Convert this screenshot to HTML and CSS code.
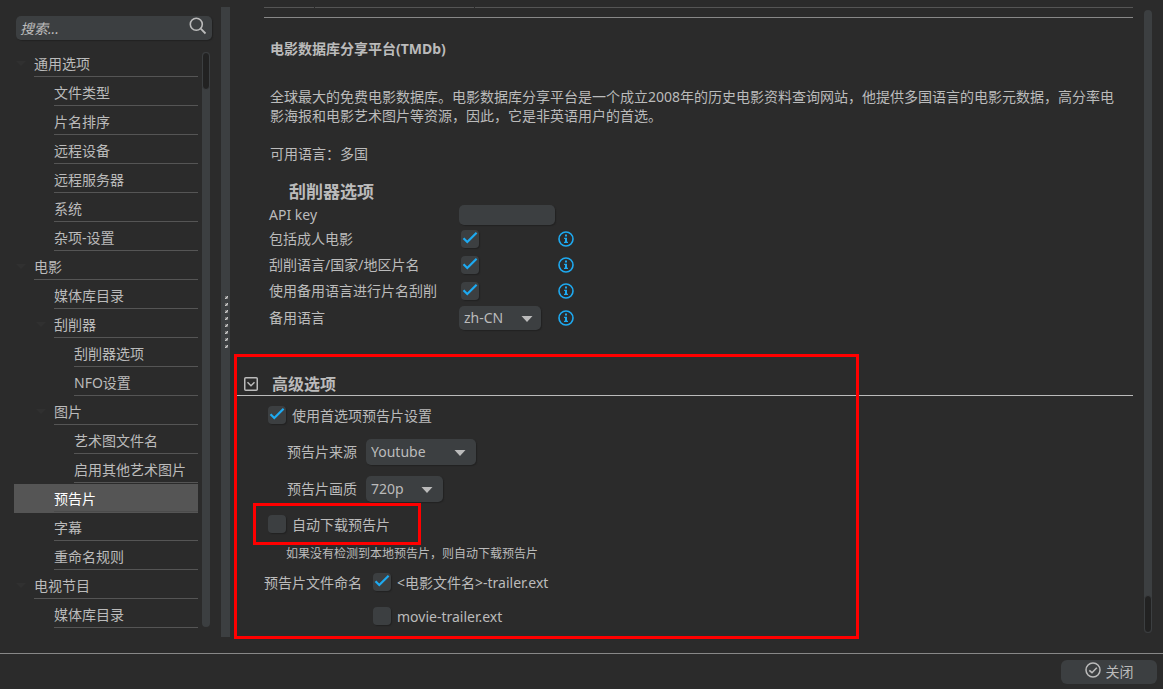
FILE: index.html
```
<!DOCTYPE html>
<html lang="zh-CN">
<head>
<meta charset="utf-8">
<title>设置</title>
<link rel="stylesheet" href="styles.css">
</head>
<body>
<svg class="defs" aria-hidden="true">
  <symbol id="tick" viewBox="0 0 18 18"><path d="M2.5 8.2 6.3 12 15.6 2.8" fill="none" stroke="#1eaaf1" stroke-width="2.2"/></symbol>
  <symbol id="info" viewBox="0 0 16 16"><circle cx="8" cy="8" r="7" fill="none" stroke="#1eaaf1" stroke-width="1.6"/><path d="M7 3.6h2v2H7zM6.1 6.8H9v4h1v1.2H6v-1.2h1V8h-.9z" fill="#1eaaf1"/></symbol>
  <symbol id="arrow" viewBox="0 0 12 6"><path d="M.5 0h11L6 6z" fill="#bbb"/></symbol>
</svg>
<div class="app">
  <div class="workspace">
    <aside class="sidebar">
      <div class="search">
        <input type="text" placeholder="搜索..." aria-label="搜索">
        <svg class="search-icon" viewBox="0 0 18 18" aria-hidden="true"><circle cx="7.3" cy="7.3" r="6" fill="none" stroke="#bbb" stroke-width="1.6"/><path d="M11.7 11.7 16.5 16.5" stroke="#bbb" stroke-width="1.8"/></svg>
      </div>
      <div class="tree-area">
        <ul class="tree">
          <li class="l1 open"><a href="#">通用选项</a></li>
          <li class="l2"><a href="#">文件类型</a></li>
          <li class="l2"><a href="#">片名排序</a></li>
          <li class="l2"><a href="#">远程设备</a></li>
          <li class="l2"><a href="#">远程服务器</a></li>
          <li class="l2"><a href="#">系统</a></li>
          <li class="l2"><a href="#">杂项-设置</a></li>
          <li class="l1 open"><a href="#">电影</a></li>
          <li class="l2"><a href="#">媒体库目录</a></li>
          <li class="l2 open"><a href="#">刮削器</a></li>
          <li class="l3"><a href="#">刮削器选项</a></li>
          <li class="l3"><a href="#">NFO设置</a></li>
          <li class="l2 open"><a href="#">图片</a></li>
          <li class="l3"><a href="#">艺术图文件名</a></li>
          <li class="l3"><a href="#">启用其他艺术图片</a></li>
          <li class="l2 selected"><a href="#" aria-current="page">预告片</a></li>
          <li class="l2"><a href="#">字幕</a></li>
          <li class="l2"><a href="#">重命名规则</a></li>
          <li class="l1 open"><a href="#">电视节目</a></li>
          <li class="l2"><a href="#">媒体库目录</a></li>
        </ul>
        <div class="scrollbar"><div class="thumb"></div></div>
      </div>
    </aside>
    <div class="splitter"><i></i><i></i><i></i><i></i><i></i><i></i><i></i><i></i></div>
    <main class="content">
      <div class="page">
        <section class="scraper">
          <div class="table-end"><span></span><span></span><span></span></div>
          <div class="about">
            <h3>电影数据库分享平台(TMDb)</h3>
            <p>全球最大的免费电影数据库。电影数据库分享平台是一个成立2008年的历史电影资料查询网站，他提供多国语言的电影元数据，高分率电影海报和电影艺术图片等资源，因此，它是非英语用户的首选。</p>
            <p>可用语言：多国</p>
          </div>
          <h2>刮削器选项</h2>
          <div class="form">
            <label for="key">API key</label>
            <input class="field" id="key" type="text">
            <label for="adult">包括成人电影</label>
            <span class="check"><input id="adult" type="checkbox" checked><svg><use href="#tick"/></svg></span>
            <svg class="info"><use href="#info"/></svg>
            <label for="region">刮削语言/国家/地区片名</label>
            <span class="check"><input id="region" type="checkbox" checked><svg><use href="#tick"/></svg></span>
            <svg class="info"><use href="#info"/></svg>
            <label for="fallback">使用备用语言进行片名刮削</label>
            <span class="check"><input id="fallback" type="checkbox" checked><svg><use href="#tick"/></svg></span>
            <svg class="info"><use href="#info"/></svg>
            <label for="lang">备用语言</label>
            <span class="select lang"><select id="lang"><option>zh-CN</option></select><svg><use href="#arrow"/></svg></span>
            <svg class="info"><use href="#info"/></svg>
          </div>
        </section>
        <section class="advanced">
          <h2>
            <svg viewBox="0 0 14 14" aria-hidden="true"><rect x=".75" y=".75" width="12.5" height="12.5" rx="1" fill="none" stroke="#bbb" stroke-width="1.5"/><path d="M3.5 5.3 7 8.7l3.5-3.4" fill="none" stroke="#bbb" stroke-width="1.5"/></svg>
            高级选项
          </h2>
          <div class="row option first">
            <span class="check"><input id="use" type="checkbox" checked><svg><use href="#tick"/></svg></span>
            <label for="use">使用首选项预告片设置</label>
          </div>
          <div class="row choice">
            <label for="source">预告片来源</label>
            <span class="select source"><select id="source"><option>Youtube</option></select><svg><use href="#arrow"/></svg></span>
          </div>
          <div class="row choice">
            <label for="quality">预告片画质</label>
            <span class="select quality"><select id="quality"><option>720p</option></select><svg><use href="#arrow"/></svg></span>
          </div>
          <div class="row option auto">
            <span class="check"><input id="auto" type="checkbox"></span>
            <label for="auto">自动下载预告片</label>
            <div class="mark mark-small"></div>
          </div>
          <p class="hint">如果没有检测到本地预告片，则自动下载预告片</p>
          <div class="naming">
            <span class="name">预告片文件命名</span>
            <div class="row">
              <span class="check"><input id="n1" type="checkbox" checked><svg><use href="#tick"/></svg></span>
              <label for="n1">&lt;电影文件名&gt;-trailer.ext</label>
            </div>
            <div class="row second">
              <span class="check"><input id="n2" type="checkbox"></span>
              <label for="n2">movie-trailer.ext</label>
            </div>
          </div>
          <div class="mark mark-large"></div>
        </section>
      </div>
      <div class="scrollbar at-end"><div class="thumb"></div></div>
    </main>
  </div>
  <footer class="footer">
    <button type="button"><svg viewBox="0 0 16 16" aria-hidden="true"><circle cx="8" cy="8" r="7" fill="none" stroke="#bbb" stroke-width="1.5"/><path d="M4.3 8.3 7 10.7l4.8-5" fill="none" stroke="#bbb" stroke-width="1.6"/></svg>关闭</button>
  </footer>
</div>
</body>
</html>
```
FILE: styles.css
```
* { box-sizing: border-box; }
body, h2, h3, p, ul { margin: 0; padding: 0; }
body {
  background: #2b2b2b;
  color: #bbb;
  font: 14px/20px "Noto Sans", "Noto Sans CJK SC", sans-serif;
}
input, select, button { font: inherit; color: inherit; border: 0; margin: 0; }
svg { display: block; flex: none; }
.defs { position: absolute; width: 0; height: 0; }

.app { min-height: 100vh; display: flex; flex-direction: column; }
.workspace { flex: 1; display: flex; border-bottom: 1px solid #888; }

.sidebar { width: 221px; flex: none; padding: 16px 9px 24px 14px; display: flex; flex-direction: column; }
.search {
  display: flex; align-items: center;
  height: 24px; margin-left: 2px; padding: 0 5px 0 4px;
  background: #3c3f41; border-radius: 5px; box-shadow: 1px 1px 1px #222;
}
.search input { flex: 1; min-width: 0; background: none; padding: 0; height: 24px; font-style: italic; outline: 0; }
.search input::placeholder { color: #bbb; opacity: 1; }
.search-icon { width: 18px; height: 18px; margin-bottom: 4px; }

.tree-area { flex: 1; display: flex; gap: 4px; padding: 9px 2px 0 0; }
.tree { flex: 1; list-style: none; }
.tree li { position: relative; height: 29px; padding-bottom: 1px; }
.tree a {
  display: block; height: 28px; line-height: 29px;
  color: inherit; text-decoration: none; border-bottom: 1px solid #555;
}
.tree .l1 { padding-left: 20px; }
.tree .l2 { padding-left: 40px; }
.tree .l3 { padding-left: 60px; }
.tree .open::before {
  content: ""; position: absolute; top: 12px; margin-left: -18px;
  border: 5px solid transparent; border-top-color: #303030; border-bottom: 0;
}
.tree .selected { background: #555; color: #fff; }
.tree .selected a { border-color: #4b4b4b; }

.scrollbar { width: 8px; flex: none; background: #3c3f41; border-radius: 4px; display: flex; flex-direction: column; }
.sidebar .scrollbar { margin: 3px 0 2px; }
.thumb { height: 38px; background: #222; border: 1px solid #3c3f41; border-radius: 4px; }
.at-end { justify-content: flex-end; margin: 10px 11px 20px; }

.splitter {
  width: 9px; flex: none; margin: 7px 0 16px; padding-left: 2px;
  background: #3c3f41;
  display: flex; flex-direction: column; align-items: center; justify-content: center; gap: 4px;
}
.splitter i { width: 3px; height: 3px; background: linear-gradient(135deg, #777 35%, #ccc 50%, #777 85%); }

.content { flex: 1; min-width: 0; display: flex; }
.page { flex: 1; min-width: 0; padding-left: 7px; }
.scraper { padding-left: 27px; }
.table-end { display: grid; grid-template-columns: 50px 159px 1fr; gap: 1px; padding: 7px 0 9px; border-bottom: 1px solid #888; }
.table-end span { height: 1px; background: #555; }
.about { padding: 21px 14px 0 6px; line-height: 19px; }
.about h3 { font-size: 14px; margin-bottom: 29px; }
.about p { margin-bottom: 19px; }
.scraper h2 { font-size: 17px; line-height: 24px; margin-top: -2px; padding-left: 25px; }
.form {
  display: grid; grid-template-columns: 190px 96px auto; grid-template-rows: 22px repeat(3, 26px) 28px;
  align-items: center; justify-content: start; padding-left: 5px;
}
.form label { grid-column: 1; }
.form .check { margin-left: 2px; }
.field { width: 96px; height: 20px; background: #3c3f41; border-radius: 5px; padding: 0 5px; box-shadow: 1px 1px 1px #222; }
.info { width: 16px; height: 16px; margin-left: 3px; }

.check { position: relative; width: 18px; height: 18px; flex: none; }
.check input { appearance: none; display: block; width: 18px; height: 18px; background: #3c3f41; border-radius: 4px; box-shadow: 1px 1px 1px #222; }
.check svg { position: absolute; inset: 0; width: 18px; height: 18px; pointer-events: none; }

.select { position: relative; display: block; height: 26px; }
.select select { appearance: none; width: 100%; height: 100%; padding: 0 5px; background: #3c3f41; border-radius: 5px; box-shadow: 1px 1px 1px #222; }
.select svg { position: absolute; right: 8px; top: 50%; margin-top: -2px; width: 12px; height: 6px; pointer-events: none; }
.lang { width: 82px; height: 24px; }
.source { width: 110px; }
.source svg, .quality svg { right: 10px; }
.quality { width: 77px; }

.advanced { position: relative; margin-top: 40px; }
.advanced h2 {
  display: flex; align-items: center; gap: 14px;
  height: 24px; padding-left: 7px; font-size: 16px; border-bottom: 1px solid #bbb;
}
.advanced h2 svg { width: 14px; height: 14px; }
.row { display: flex; gap: 6px; height: 22px; line-height: 24px; }
.row .check { margin-top: 2px; }
.option { padding-left: 31px; }
.first { margin-top: 8px; margin-bottom: 13px; }
.choice { height: 26px; line-height: 26px; padding-left: 50px; gap: 9px; margin-bottom: 11px; }
.auto { position: relative; margin-bottom: 9px; }
.hint { padding-left: 49px; font-size: 12px; margin-bottom: 7px; }
.naming { display: grid; grid-template-columns: 109px 1fr; row-gap: 12px; padding-left: 27px; }
.name { line-height: 24px; height: 22px; }
.second { grid-column: 2; }

.mark { position: absolute; border: 3px solid #f00; pointer-events: none; }
.mark-small { left: 16px; top: -10px; width: 168px; height: 42px; }
.mark-large { left: -3px; top: -18px; width: 625px; height: 285px; }

.footer { height: 35px; flex: none; display: flex; justify-content: flex-end; align-items: center; padding-right: 6px; }
.footer button {
  display: flex; align-items: center; justify-content: center; gap: 5px;
  width: 96px; height: 24px; padding: 0; background: #3c3f41; border-radius: 6px;
}
.footer svg { width: 16px; height: 16px; margin-bottom: 3px; }
```
